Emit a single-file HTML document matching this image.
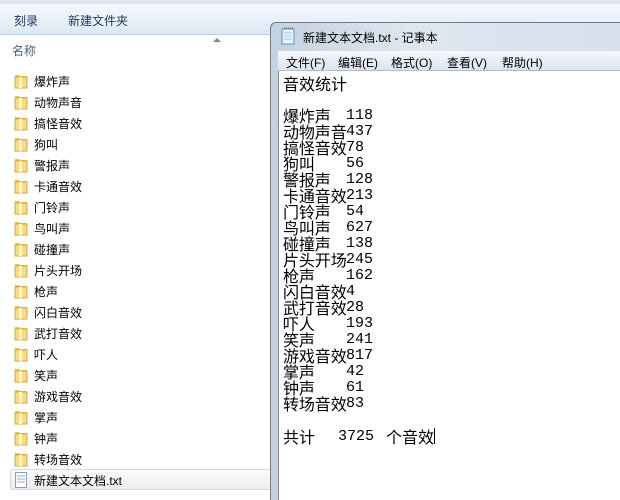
<!DOCTYPE html>
<html><head><meta charset="utf-8"><style>
*{margin:0;padding:0;box-sizing:border-box}
html,body{width:620px;height:500px;overflow:hidden}
body{background:#fff;position:relative;font-family:"Liberation Sans","Noto Sans CJK SC","Microsoft YaHei",sans-serif}
.tb{position:absolute;left:0;top:0;width:620px;height:35px;background:linear-gradient(#f6f9fd,#dde8f5);border-top:4px solid #dfe6ef;border-bottom:1px solid #bccde0}
.tb span{position:absolute;top:8px;font-size:12px;color:#1e395b}
.hdr{position:absolute;left:12px;top:42px;font-size:12px;color:#4c607a}
.arr{position:absolute;left:213px;top:38px;width:0;height:0;border-left:4px solid transparent;border-right:4px solid transparent;border-bottom:4px solid #6d8db5}
.row{position:absolute;left:0;height:21px;font-size:12px;color:#000}
.row svg{position:absolute;left:14px;top:3px}
.row span{position:absolute;left:34px;top:3px;white-space:nowrap}
.sel{position:absolute;left:10px;top:469px;width:262px;height:21px;border:1px solid #d8d8d8;border-radius:3px;background:linear-gradient(#fafafa,#eeeeee)}
.np{position:absolute;left:270px;top:22px;width:360px;height:478px;background:linear-gradient(90deg,#c4d1df,#dfe7f0 40%,#d5e0ec);border:1px solid #6e7c8c;border-bottom:none;border-radius:6px 0 0 0}
.tt{position:absolute;left:303px;top:29px;font-size:12px;color:#000}
.mb{position:absolute;left:278px;top:51px;width:342px;height:20px;background:linear-gradient(#f6f8fb,#dde5f0);border-bottom:1px solid #b6bcc6}
.mb span{position:absolute;top:3px;font-size:12px;color:#000}
.ta{position:absolute;left:278px;top:71px;width:342px;height:429px;background:#fff;border-left:1px solid #828790}
.l{position:absolute;font-size:16px;line-height:16px;font-family:"Noto Sans CJK SC","WenQuanYi Zen Hei",sans-serif;color:#000;white-space:nowrap}
.n{position:absolute;font-size:15px;line-height:16px;font-family:"Liberation Mono",monospace;color:#000}
</style></head><body>
<div class="tb"><span style="left:14px">刻录</span><span style="left:68px">新建文件夹</span></div>
<div class="hdr">名称</div><div class="arr"></div>
<div class="sel"></div>

<div class="np"></div>
<svg style="position:absolute;left:280px;top:27px" width="16" height="18"><rect x="2" y="2" width="12" height="15" fill="#eaf4fb" stroke="#5f8fb3"/><line x1="4" y1="1" x2="13" y2="1" stroke="#666" stroke-dasharray="1 1"/><line x1="4" y1="6" x2="12" y2="6" stroke="#9cc"/><line x1="4" y1="9" x2="12" y2="9" stroke="#9cc"/><line x1="4" y1="12" x2="12" y2="12" stroke="#9cc"/></svg>
<div class="tt">新建文本文档.txt - 记事本</div>
<div class="mb"><span style="left:8px">文件(F)</span><span style="left:60px">编辑(E)</span><span style="left:113px">格式(O)</span><span style="left:169px">查看(V)</span><span style="left:224px">帮助(H)</span></div>
<div class="ta"></div>

<div id="left"></div>
<div id="txt"></div>
<script>
var names=["爆炸声","动物声音","搞怪音效","狗叫","警报声","卡通音效","门铃声","鸟叫声","碰撞声","片头开场","枪声","闪白音效","武打音效","吓人","笑声","游戏音效","掌声","钟声","转场音效"];
var nums=["118","437","78","56","128","213","54","627","138","245","162","4","28","193","241","817","42","61","83"];
var folder='<svg width="14" height="16"><path d="M1 2h4l1 1h7v12H1z" fill="#e8c35a"/><rect x="1" y="4" width="12" height="11" fill="#f6dc8a" stroke="#d3a93e" stroke-width="1"/><rect x="5" y="4" width="3" height="11" fill="#fff3c4"/></svg>';
var h='';
for(var i=0;i<names.length;i++){h+='<div class="row" style="top:'+(70+i*21)+'px">'+folder+'<span>'+names[i]+'</span></div>';}
h+='<div class="row" style="top:469px"><svg width="14" height="16"><rect x="1.5" y="0.5" width="11" height="15" fill="#fff" stroke="#8aa0b8"/><line x1="3" y1="4" x2="11" y2="4" stroke="#9ab"/><line x1="3" y1="7" x2="11" y2="7" stroke="#9ab"/><line x1="3" y1="10" x2="11" y2="10" stroke="#9ab"/></svg><span>新建文本文档.txt</span></div>';
document.getElementById('left').innerHTML=h;
var t='<div class="l" style="left:283px;top:75px">音效统计</div>';
for(var i=0;i<names.length;i++){var y=107+i*16;t+='<div class="l" style="left:283px;top:'+y+'px;letter-spacing:-0.1px">'+names[i]+'</div><div class="n" style="left:346px;top:'+(y+1)+'px">'+nums[i]+'</div>';}
t+='<div class="l" style="left:283px;top:428px">共计</div><div class="n" style="left:338px;top:429px">3725</div><div class="l" style="left:386px;top:428px">个音效</div><div style="position:absolute;left:434px;top:428px;width:1px;height:16px;background:#000"></div>';
document.getElementById('txt').innerHTML=t;
</script>
</body></html>
